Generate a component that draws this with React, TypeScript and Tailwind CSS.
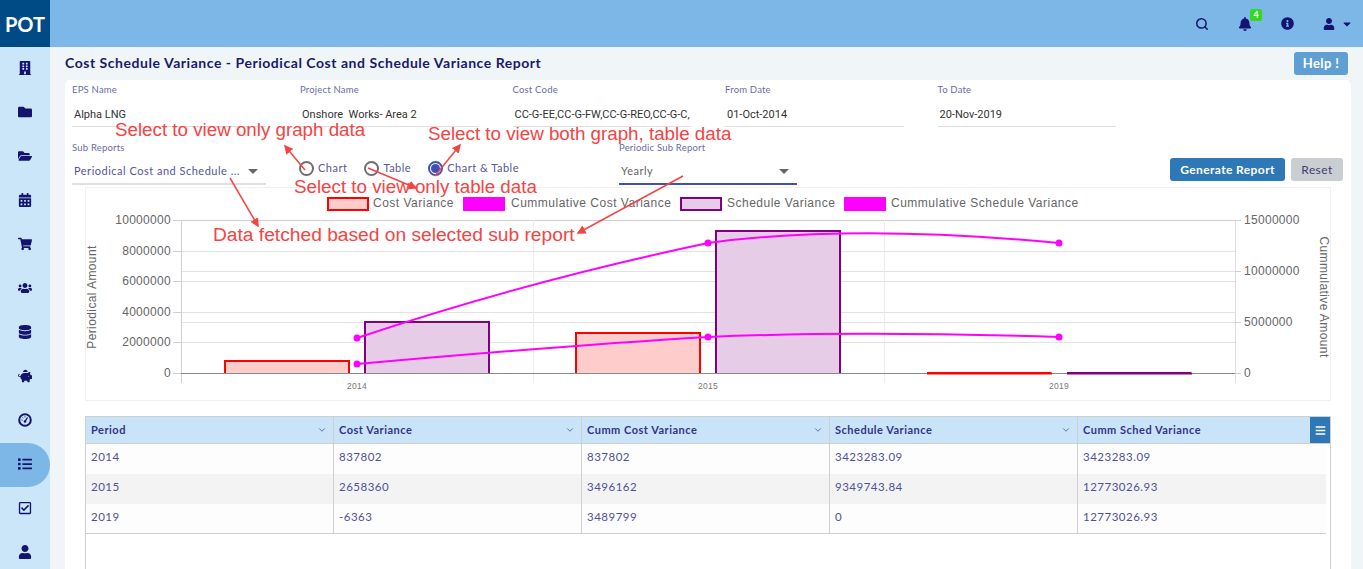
import {
  FaBell,
  FaBuilding,
  FaCalendarAlt,
  FaCaretDown,
  FaDatabase,
  FaFolder,
  FaFolderOpen,
  FaInfoCircle,
  FaList,
  FaPiggyBank,
  FaRegCheckSquare,
  FaShoppingCart,
  FaUser,
  FaUsers,
  FaBars,
} from "react-icons/fa";
import { ChevronDown, Search } from "lucide-react";

function GaugeIcon() {
  return (
    <svg width="14" height="14" viewBox="0 0 14 14" fill="none">
      <circle cx="7" cy="7" r="5.8" stroke="currentColor" strokeWidth="2" />
      <path d="M7 8.5L9.5 4.5" stroke="currentColor" strokeWidth="1.4" />
      <circle cx="7" cy="8.5" r="1.3" fill="currentColor" />
      <path d="M3.5 7H4.5M4.5 4.5L5.2 5.2M7 3.3V4.3" stroke="currentColor" strokeWidth="1" />
    </svg>
  );
}

const NAV = [
  { icon: FaBuilding },
  { icon: FaFolder },
  { icon: FaFolderOpen },
  { icon: FaCalendarAlt },
  { icon: FaShoppingCart },
  { icon: FaUsers },
  { icon: FaDatabase },
  { icon: FaPiggyBank },
  { icon: GaugeIcon },
  { icon: FaList, active: true },
  { icon: FaRegCheckSquare },
  { icon: FaUser },
];

const FIELDS = [
  { label: "EPS Name", value: "Alpha LNG", cls: "w-[194px]" },
  { label: "Project Name", value: "Onshore  Works- Area 2", cls: "w-[178.5px]" },
  { label: "Cost Code", value: "CC-G-EE,CC-G-FW,CC-G-REO,CC-G-C,", cls: "w-[178.5px]" },
  { label: "From Date", value: "01-Oct-2014", cls: "w-[178.5px]" },
  { label: "To Date", value: "20-Nov-2019", cls: "w-[178.5px]" },
];

const COLUMNS = ["Period", "Cost Variance", "Cumm Cost Variance", "Schedule Variance", "Cumm Sched Variance"];

const ROWS = [
  ["2014", "837802", "837802", "3423283.09", "3423283.09"],
  ["2015", "2658360", "3496162", "9349743.84", "12773026.93"],
  ["2019", "-6363", "3489799", "0", "12773026.93"],
];

const ARROWS = [
  [305, 170, 285, 146],
  [368, 168, 416, 188],
  [435, 176, 460, 145],
  [683, 176, 578, 233],
  [230, 178, 258, 226],
];

const NOTES = [
  { text: "Select to view only graph data", cls: "left-[115px] top-[119px] text-[18.75px]" },
  { text: "Select to view both graph, table data", cls: "left-[428px] top-[123px] text-[18.75px]" },
  { text: "Select to view only table data", cls: "left-[294px] top-[176px] text-[18.75px]" },
  { text: "Data fetched based on selected sub report", cls: "left-[213px] top-[224px] text-[19.2px]" },
];

const LEFT_TICKS = [
  ["10000000", 220],
  ["8000000", 251],
  ["6000000", 281],
  ["4000000", 312],
  ["2000000", 342],
  ["0", 373],
] as const;

const RIGHT_TICKS = [
  ["15000000", 220],
  ["10000000", 271],
  ["5000000", 322],
  ["0", 373],
] as const;

const BARS = [
  { x: 225, top: 361, stroke: "#ff0000", fill: "#ffcccc" },
  { x: 365, top: 322, stroke: "#800080", fill: "#e6cce6" },
  { x: 576, top: 333, stroke: "#ff0000", fill: "#ffcccc" },
  { x: 716, top: 231, stroke: "#800080", fill: "#e6cce6" },
  { x: 927, top: 373, stroke: "#ff0000", fill: "#ffcccc" },
  { x: 1067, top: 373, stroke: "#800080", fill: "#e6cce6" },
];

const LEGEND = [
  { x: 327, fill: "#ffcccc", stroke: "#ff0000", text: "Cost Variance", tx: 373 },
  { x: 463, fill: "#ff00ff", stroke: "#ff00ff", text: "Cummulative Cost Variance", tx: 511 },
  { x: 680, fill: "#e6cce6", stroke: "#800080", text: "Schedule Variance", tx: 727 },
  { x: 844, fill: "#ff00ff", stroke: "#ff00ff", text: "Cummulative Schedule Variance", tx: 891 },
];

function Chart() {
  const font = { fontFamily: "'Liberation Sans', Arial, sans-serif" };
  return (
    <svg viewBox="86 188 1244 212" className="block h-[212px] w-[1244px] overflow-visible" style={font}>
      {LEGEND.map((l) => (
        <g key={l.text}>
          <rect x={l.x + 1} y={198} width={40} height={12} fill={l.fill} stroke={l.stroke} strokeWidth={2} />
          <text x={l.tx} y={207} fontSize={12} letterSpacing={0.5} fill="#666">
            {l.text}
          </text>
        </g>
      ))}

      {/* grid */}
      {[220, 251, 271, 281, 312, 322, 342].map((y) => (
        <line key={y} x1={181} x2={1235} y1={y + 0.5} y2={y + 0.5} stroke={y === 220 ? "#cfcfcf" : "#e2e2e2"} />
      ))}
      {[533, 884].map((x) => (
        <line key={x} x1={x + 0.5} x2={x + 0.5} y1={220} y2={383} stroke="#ececec" />
      ))}
      <line x1={181.5} x2={181.5} y1={220} y2={383} stroke="#cfcfcf" />
      <line x1={1235.5} x2={1235.5} y1={220} y2={383} stroke="#dedede" />

      {/* bars */}
      {BARS.map((b) => (
        <path
          key={b.x}
          d={`M${b.x} 373V${b.top}H${b.x + 124}V373`}
          fill={b.fill}
          stroke={b.stroke}
          strokeWidth={2}
        />
      ))}
      <line x1={175} x2={1240} y1={373.5} y2={373.5} stroke="#8a8a8a" />
      <line x1={927} x2={1052} y1={373.5} y2={373.5} stroke="#ff0000" strokeWidth={2} />
      <line x1={1067} x2={1192} y1={373.5} y2={373.5} stroke="#800080" strokeWidth={2} />

      {/* lines */}
      <path d="M357 338C470 300 590 268 708 243C790 232 900 228 1059 243" fill="none" stroke="#ff00ff" strokeWidth={2} />
      <path d="M357 364C470 354 590 344 708 337C800 333 930 333 1059 337" fill="none" stroke="#ff00ff" strokeWidth={2} />
      {[
        [357, 338],
        [708, 243],
        [1059, 243],
        [357, 364],
        [708, 337],
        [1059, 337],
      ].map(([cx, cy]) => (
        <circle key={`${cx}-${cy}`} cx={cx} cy={cy} r={3.5} fill="#ff00ff" />
      ))}

      {/* axes */}
      {LEFT_TICKS.map(([t, y]) => (
        <g key={t}>
          <text x={171} y={y + 4} textAnchor="end" fontSize={12} letterSpacing={0.3} fill="#666">
            {t}
          </text>
          <line x1={173} x2={181} y1={y + 0.5} y2={y + 0.5} stroke="#cfcfcf" />
        </g>
      ))}
      {RIGHT_TICKS.map(([t, y]) => (
        <g key={`r${t}`}>
          <text x={1244} y={y + 4} fontSize={12} letterSpacing={0.3} fill="#666">
            {t}
          </text>
          <line x1={1235} x2={1241} y1={y + 0.5} y2={y + 0.5} stroke="#cfcfcf" />
        </g>
      ))}
      {[
        ["2014", 357],
        ["2015", 708],
        ["2019", 1059],
      ].map(([t, x]) => (
        <text key={t} x={x} y={389} textAnchor="middle" fontSize={8.5} letterSpacing={0.3} fill="#777">
          {t}
        </text>
      ))}
      <text transform="translate(96 297) rotate(-90)" textAnchor="middle" fontSize={12} letterSpacing={0.4} fill="#666">
        Periodical Amount
      </text>
      <text transform="translate(1320 297) rotate(90)" textAnchor="middle" fontSize={12} letterSpacing={0.4} fill="#666">
        Cummulative Amount
      </text>
    </svg>
  );
}

function Radio({ label, checked }: { label: string; checked?: boolean }) {
  return (
    <label className="flex items-center gap-[4px]">
      <span
        className={`flex h-[15px] w-[15px] items-center justify-center rounded-full border-2 ${
          checked ? "border-[#3f51b5]" : "border-[#6f6f6f]"
        }`}
      >
        {checked && <span className="h-[9px] w-[9px] rounded-full bg-[#3f51b5]" />}
      </span>
      <span className="text-[11px] tracking-[0.5px] text-[#55559a]">{label}</span>
    </label>
  );
}

export default function App() {
  return (
    <div className="relative flex h-screen w-full flex-col overflow-hidden bg-[#f0f5f8] font-['Lato','Open_Sans',sans-serif]">
      {/* top bar */}
      <header className="flex h-[47px] shrink-0 items-center bg-[#7cb7e8] text-[#14146e]">
        <div className="flex h-full w-[50px] items-center justify-center bg-[#004b85] text-[20px] font-bold text-white">
          POT
        </div>
        <div className="ml-auto flex items-center pr-[10px]">
          <Search size={14} strokeWidth={2.6} className="mr-[29px]" />
          <div className="relative mr-[29px]">
            <FaBell className="text-[14px]" />
            <span className="absolute -right-[10px] -top-[8px] flex h-[12px] w-[12px] items-center justify-center rounded-[2px] bg-[#35d820] text-[9px] font-bold leading-none text-white">
              4
            </span>
          </div>
          <FaInfoCircle className="mr-[29px] text-[13px]" />
          <FaUser className="text-[12px]" />
          <FaCaretDown className="ml-[6px] text-[12px]" />
        </div>
      </header>

      <div className="flex min-h-0 flex-1">
        {/* sidebar */}
        <nav className="flex w-[50px] shrink-0 flex-col bg-[#cbe5f9] text-[#14146e]">
          {NAV.map(({ icon: Icon, active }, i) => (
            <div
              key={i}
              className={`flex h-[44px] shrink-0 items-center justify-center pb-[3px] text-[14px] ${
                active ? "rounded-r-[22px] bg-[#7cb7e8]" : ""
              }`}
            >
              <Icon />
            </div>
          ))}
        </nav>

        {/* content */}
        <main className="flex min-w-0 flex-1 flex-col pl-[15px] pr-[12px]">
          <div className="flex h-[33px] shrink-0 items-center justify-between">
            <h1 className="pb-[2px] text-[14px] font-bold tracking-[0.54px] text-[#1a1a6a]">
              Cost Schedule Variance - Periodical Cost and Schedule Variance Report
            </h1>
            <button className="mr-[3px] h-[23px] w-[54px] rounded-[3px] bg-[#5f9fd4] text-[13px] font-bold tracking-[0.4px] text-white">
              Help !
            </button>
          </div>

          <section className="flex-1 rounded-t-[5px] bg-white px-[7px] pt-[4px]">
            <div className="flex gap-[34px]">
              {FIELDS.map((f) => (
                <div key={f.label} className={f.cls}>
                  <div className="text-[9.5px] leading-[12px] tracking-[0.2px] text-[#6b6ba8]">{f.label}</div>
                  <div className="flex h-[31px] items-center whitespace-pre border-b border-[#dedede] pl-[2px] pt-[8px] font-['Roboto',sans-serif] text-[11px] text-[#333]">
                    {f.value}
                  </div>
                </div>
              ))}
            </div>

            <div className="mt-[15px] flex items-start">
              <div className="w-[194px]">
                <div className="text-[9.5px] leading-[12px] tracking-[0.2px] text-[#6b6ba8]">Sub Reports</div>
                <div className="flex h-[31px] items-center justify-between border-b-2 border-[#e0e0e0] pl-[2px] pr-[8px] pt-[5px] text-[11px] tracking-[0.5px] text-[#55559a]">
                  <span>Periodical Cost and Schedule ...</span>
                  <span className="h-0 w-0 border-x-[5px] border-t-[5px] border-x-transparent border-t-[#666]" />
                </div>
              </div>
              <div className="ml-[33px] mt-[18px] flex gap-[17px]">
                <Radio label="Chart" />
                <Radio label="Table" />
                <Radio label="Chart & Table" checked />
              </div>
              <div className="ml-[100px] w-[178px]">
                <div className="text-[9.5px] leading-[12px] tracking-[0.2px] text-[#6b6ba8]">Periodic Sub Report</div>
                <div className="flex h-[31px] items-center justify-between border-b-2 border-[#3f51b5] pl-[2px] pr-[8px] pt-[5px] text-[11px] tracking-[0.5px] text-[#666]">
                  <span>Yearly</span>
                  <span className="h-0 w-0 border-x-[5px] border-t-[5px] border-x-transparent border-t-[#666]" />
                </div>
              </div>
              <div className="ml-auto mt-[16px] flex gap-[6px] pr-[1px]">
                <button className="h-[23px] w-[115px] rounded-[3px] bg-[#2e78b5] text-[12px] font-bold tracking-[0.4px] text-white">
                  Generate Report
                </button>
                <button className="h-[23px] w-[52px] rounded-[3px] bg-[#caced3] text-[12px] tracking-[0.4px] text-[#3d3d70]">
                  Reset
                </button>
              </div>
            </div>

            <div className="ml-[13px] mt-[2px] h-[214px] w-[1246px] border border-[#f0f0f0]">
              <Chart />
            </div>

            {/* table */}
            <div className="ml-[13px] mt-[15px] h-[300px] w-[1246px] border border-[#cfcfcf]">
              <div className="relative grid h-[27px] grid-cols-[248px_248px_248px_248px_1fr] border-b border-[#cfcfcf] bg-[#c9e4f8]">
                {COLUMNS.map((c) => (
                  <div
                    key={c}
                    className="flex items-center justify-between border-r border-[#cfcfcf] pl-[5px] pr-[6px] text-[11px] font-bold tracking-[0.5px] text-[#33338a] last:border-r-0 last:pr-[26px]"
                  >
                    <span>{c}</span>
                    <ChevronDown size={10} className="text-[#55559a]" />
                  </div>
                ))}
                <div className="absolute right-0 top-0 flex h-[26px] w-[20px] items-center justify-center bg-[#2e78b5] text-[11px] text-white">
                  <FaBars />
                </div>
              </div>
              <div className="w-[1240px] border-b border-[#cfcfcf]">
                {ROWS.map((r, i) => (
                  <div
                    key={r[0]}
                    className={`grid h-[30px] grid-cols-[248px_248px_248px_248px_1fr] last:h-[29px] ${
                      i % 2 === 1 ? "bg-[#f3f3f3]" : "bg-[#fdfdfd]"
                    }`}
                  >
                    {r.map((v, j) => (
                      <div
                        key={j}
                        className="border-r border-[#cfcfcf] pl-[5px] pt-[4px] text-[11.5px] tracking-[0.5px] text-[#50509a] last:border-r-0"
                      >
                        {v}
                      </div>
                    ))}
                  </div>
                ))}
              </div>
            </div>
          </section>
        </main>
      </div>

      {/* annotations laid over the screenshot */}
      <svg className="pointer-events-none absolute left-0 top-0 h-[569px] w-[1363px]" viewBox="0 0 1363 569">
        <defs>
          <marker id="head" markerWidth="6" markerHeight="6" refX="5" refY="3" orient="auto">
            <path d="M0 0L6 3L0 6z" fill="#f44444" />
          </marker>
        </defs>
        {ARROWS.map(([x1, y1, x2, y2]) => (
          <line
            key={x1}
            x1={x1}
            y1={y1}
            x2={x2}
            y2={y2}
            stroke="#f44444"
            strokeWidth={1.5}
            markerEnd="url(#head)"
          />
        ))}
      </svg>
      {NOTES.map((n) => (
        <span
          key={n.text}
          className={`absolute whitespace-nowrap font-['Liberation_Sans',Arial,sans-serif] leading-[22px] text-[#f44444] ${n.cls}`}
        >
          {n.text}
        </span>
      ))}
    </div>
  );
}
